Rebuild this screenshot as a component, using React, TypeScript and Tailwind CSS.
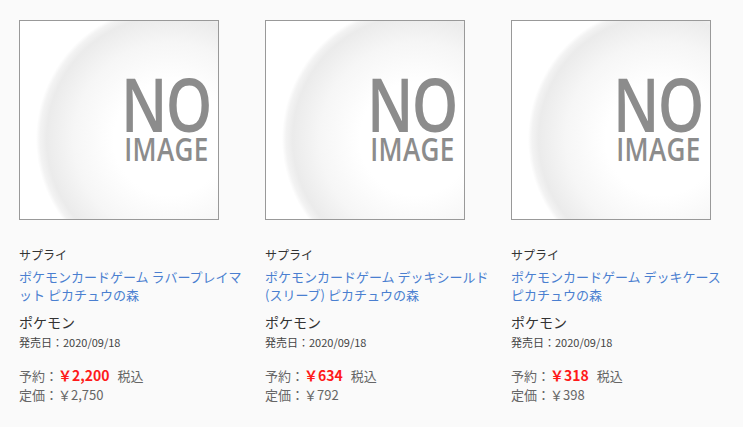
import React from 'react';

const ITEMS = [
  {
    id: 'p1',
    maker: 'サプライ',
    name: ['ポケモンカードゲーム ラバープレイマ', 'ット ピカチュウの森'],
    series: 'ポケモン',
    date: '2020/09/18',
    price: '2,200',
    listPrice: '2,750',
  },
  {
    id: 'p2',
    maker: 'サプライ',
    name: ['ポケモンカードゲーム デッキシールド', '(スリーブ) ピカチュウの森'],
    series: 'ポケモン',
    date: '2020/09/18',
    price: '634',
    listPrice: '792',
  },
  {
    id: 'p3',
    maker: 'サプライ',
    name: ['ポケモンカードゲーム デッキケース', 'ピカチュウの森'],
    series: 'ポケモン',
    date: '2020/09/18',
    price: '318',
    listPrice: '398',
  },
];

// placeholder thumbnail, drawn instead of the raster "no image" picture
const NoImage: React.FC = () => (
  <div className="relative w-[200px] h-[200px] border border-[#999] overflow-hidden bg-white bg-[radial-gradient(circle_134px_at_150px_118px,#ffffff_0%,#ffffff_42%,#f6f6f6_72%,#ebebeb_92%,#f3f3f3_97%,#ffffff_100%)]">
    <div className="absolute left-[101px] top-[54px] flex flex-col items-start text-[#8c8c8c] font-['Open_Sans',sans-serif] scale-x-[0.79] origin-left">
      <span className="text-[75px] leading-[56px] font-semibold tracking-[-2px]">NO</span>
      <span className="text-[33px] leading-[24px] font-semibold tracking-[0.5px] mt-[6px] ml-[4px]">IMAGE</span>
    </div>
  </div>
);

const App: React.FC = () => {
  return (
    <div className="w-[743px] h-[427px] bg-[#fafafa] font-['Noto_Sans_CJK_JP',sans-serif] flex pt-[20px]">
      {ITEMS.map(item => (
        <div key={item.id} className="w-[246px] pl-[19px] shrink-0">
          <NoImage />
          <div className="w-[227px] mt-[27px]">
            <p className="text-[12px] leading-[16px] text-[#333]">{item.maker}</p>
            <p className="text-[13px] leading-[18px] text-[#4a7fd0] mt-[5px]">
              {item.name[0]}
              <br />
              {item.name[1]}
            </p>
            <p className="text-[14px] leading-[18px] text-[#333] mt-[9px]">{item.series}</p>
            <p className="text-[11px] leading-[16px] text-[#444] mt-[3px]">発売日：{item.date}</p>
            <div className="mt-[16px] text-[13px] leading-[19px] text-[#666] flex items-baseline">
              <span>予約：</span>
              <span className="text-[#ff1a1a] font-bold text-[14px]">￥{item.price}</span>
              <span className="ml-[8px]">税込</span>
            </div>
            <p className="text-[13px] leading-[19px] text-[#666]">定価：￥{item.listPrice}</p>
          </div>
        </div>
      ))}
    </div>
  );
};

export default App;
